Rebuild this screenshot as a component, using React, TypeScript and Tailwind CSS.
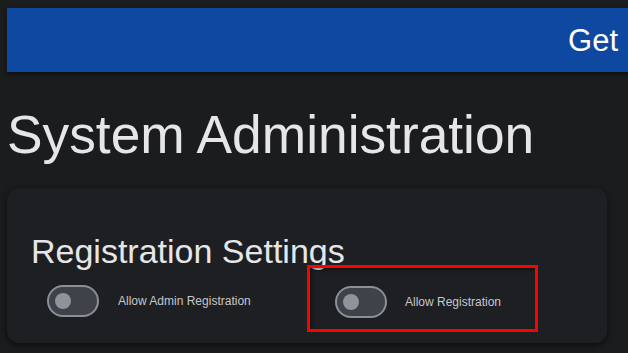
import React from "react";

function Toggle() {
  return (
    <div className="w-[52px] h-[32px] rounded-full border-2 border-[#8b8f96] bg-[#3f4249] flex items-center pl-[6px] shrink-0">
      <div className="w-[16px] h-[16px] rounded-full bg-[#8f939b]" />
    </div>
  );
}

export default function App() {
  return (
    <div
      className="w-[628px] h-[353px] overflow-hidden bg-[#1b1c1e] pt-[8px] pl-[7px]"
      style={{ fontFamily: "'Liberation Sans', Arial, sans-serif" }}
    >
      <div className="w-[640px] h-[64px] bg-[#0f48a0] flex items-center justify-end pr-[29px] shadow-[0_2px_4px_rgba(0,0,0,0.5)]">
        <span className="text-[31px] text-white leading-none">Get</span>
      </div>
      <h1 className="mt-[36px] text-[53.3px] leading-none text-[#e6e6e9] pl-[0px]">
        System Administration
      </h1>
      <div className="mt-[27px] w-[600px] h-[155px] rounded-[12px] bg-[#1e1f22] shadow-[0_2px_6px_rgba(0,0,0,0.6)] pl-[24px] pt-[46px]">
        <h2 className="text-[34px] leading-none text-[#e6e6e9]">Registration Settings</h2>
        <div className="flex mt-[-3px]">
          <div className="w-[276px] h-[66px] flex items-center pl-[16px] pt-[6px] gap-[19px]">
            <Toggle />
            <span className="text-[12px] text-[#c5c7cc]">Allow Admin Registration</span>
          </div>
          <div className="w-[231px] h-[67px] border-[3px] border-[#ff0000] flex items-center pl-[25px] pt-[6px] gap-[18px] shadow-[inset_2px_2px_4px_rgba(0,0,0,0.4)]">
            <Toggle />
            <span className="text-[12px] text-[#c5c7cc]">Allow Registration</span>
          </div>
        </div>
      </div>
    </div>
  );
}
